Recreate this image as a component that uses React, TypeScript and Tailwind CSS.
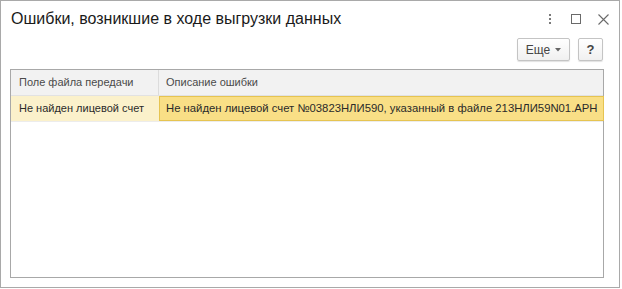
import React from "react";

export default function App() {
  return (
    <div
      className="w-[622px] h-[289px] bg-white flex"
      style={{ fontFamily: '"Liberation Sans", Arial, sans-serif' }}
    >
      <div className="w-[620px] h-[288px] border border-[#a9a9a9] flex flex-col">
        {/* Title bar */}
        <div className="h-[34px] flex items-center pl-[10px] pr-[10px]">
          <div className="flex-1 text-[16px] text-[#1a1a1a] pt-[2px] whitespace-nowrap">
            Ошибки, возникшие в ходе выгрузки данных
          </div>
          <div className="flex items-center gap-[17px] pt-[2px]">
            <svg width="8" height="12" viewBox="0 0 8 12">
              <rect x="3" y="1" width="2" height="2" fill="#7a7a7a" />
              <rect x="3" y="5" width="2" height="2" fill="#7a7a7a" />
              <rect x="3" y="9" width="2" height="2" fill="#7a7a7a" />
            </svg>
            <svg width="10" height="10" viewBox="0 0 10 10">
              <rect x="0.5" y="0.5" width="9" height="9" fill="none" stroke="#6a6a6a" strokeWidth="1" />
            </svg>
            <svg width="11" height="11" viewBox="0 0 11 11">
              <path d="M0.5 0.5 L10.5 10.5 M10.5 0.5 L0.5 10.5" stroke="#6a6a6a" strokeWidth="1.1" />
            </svg>
          </div>
        </div>
        {/* Toolbar */}
        <div className="h-[34px] flex items-start justify-end pr-[16px] pt-[3px] gap-[8px]">
          <button className="h-[23px] w-[53px] border border-[#c4c4c4] rounded-[2px] bg-gradient-to-b from-white to-[#f0f0f0] shadow-[0_1px_1px_rgba(0,0,0,0.12)] flex items-center justify-center gap-[5px] text-[12px] text-[#444]">
            <span>Еще</span>
            <svg width="6" height="4" viewBox="0 0 6 4">
              <path d="M0 0 L6 0 L3 3.5 Z" fill="#666" />
            </svg>
          </button>
          <button className="h-[23px] w-[25px] border border-[#c4c4c4] rounded-[2px] bg-gradient-to-b from-white to-[#f0f0f0] shadow-[0_1px_1px_rgba(0,0,0,0.12)] flex items-center justify-center text-[13px] font-bold text-[#444]">
            ?
          </button>
        </div>
        {/* Table */}
        <div className="ml-[9px] mr-[15px] h-[209px] border border-[#a8a8a8] flex flex-col text-[11px] whitespace-nowrap">
          <div className="h-[26px] flex bg-[#f2f2f2] border-b border-[#e2e2e2] text-[#4a4a4a]">
            <div className="w-[148px] border-r border-[#dcdcdc] flex items-center pl-[8px]">
              Поле файла передачи
            </div>
            <div className="flex-1 flex items-center pl-[7px]">Описание ошибки</div>
          </div>
          <div className="h-[26px] flex bg-[#fbf1cb] text-[#2a2a2a] border-b border-[#ececec]">
            <div className="w-[148px] flex items-center pl-[8px]">
              Не найден лицевой счет
            </div>
            <div className="flex-1 flex items-center pl-[6px] bg-[#f9df86] border border-[#e6c451] -mr-[1px] text-[11.3px]">
              Не найден лицевой счет №03823НЛИ590, указанный в файле 213НЛИ59N01.APH
            </div>
          </div>
          <div className="flex-1 bg-white" />
        </div>
      </div>
    </div>
  );
}
